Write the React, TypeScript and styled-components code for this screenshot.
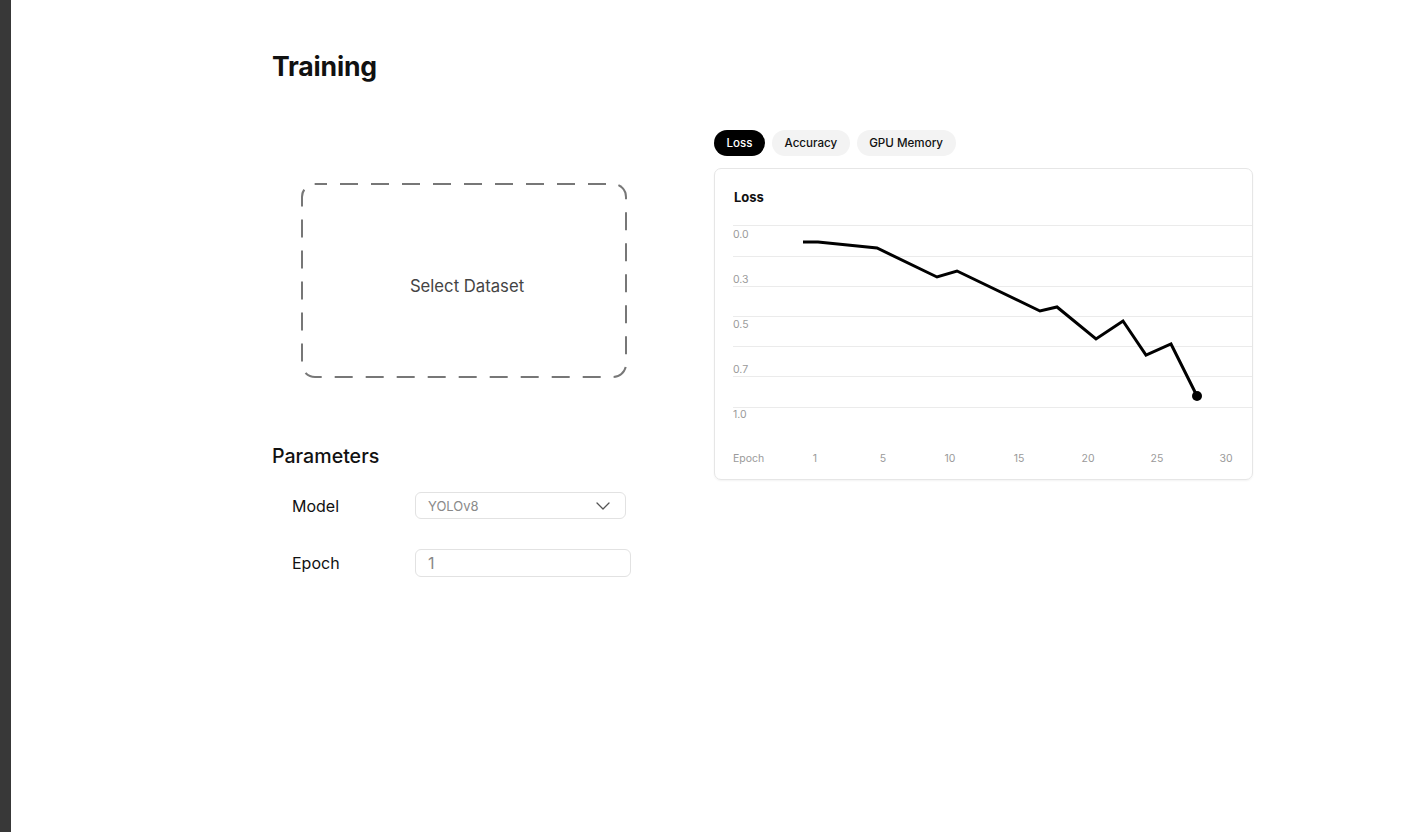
import React from "react";
import styled, { createGlobalStyle } from "styled-components";
import { ChevronDown } from "lucide-react";

const GlobalStyle = createGlobalStyle`
  html, body { margin: 0; padding: 0; background: #fff; }
  body { font-family: Inter, "Noto Sans", sans-serif; color: #111; }
  * { box-sizing: border-box; }
`;

const Shell = styled.div`
  display: flex;
  min-height: 832px;
`;

const Strip = styled.div`
  width: 11px;
  flex: none;
  background: #383838;
`;

const Main = styled.main`
  flex: 1;
  padding: 50px 0 0 261px;
`;

const Title = styled.h1`
  margin: 0;
  font-size: 26.6px;
  line-height: 32px;
  font-weight: 700;
  letter-spacing: -0.2px;
`;

const Columns = styled.div`
  display: flex;
  gap: 58px;
  margin-top: 48px;
`;

const LeftCol = styled.section`
  width: 384px;
  display: flex;
  flex-direction: column;
`;

const dashed = encodeURIComponent(
  `<svg xmlns='http://www.w3.org/2000/svg' width='100%' height='100%'><rect width='100%' height='100%' fill='none' rx='14' ry='14' stroke='#777' stroke-width='4' stroke-dasharray='18 13' stroke-dashoffset='6'/></svg>`
);

const DropZone = styled.button`
  margin: 53px 0 0 29px;
  width: 326px;
  height: 195px;
  border: none;
  border-radius: 14px;
  background: #fff url("data:image/svg+xml,${dashed}") no-repeat;
  display: flex;
  align-items: center;
  justify-content: center;
  padding: 11px 0 0 6px;
  font-family: Inter, sans-serif;
  font-size: 16.7px;
  color: #444;
  cursor: pointer;
`;

const SectionTitle = styled.h2`
  margin: 66px 0 0;
  font-size: 19.6px;
  line-height: 24px;
  font-weight: 500;
`;

const ParamList = styled.div`
  display: flex;
  flex-direction: column;
  gap: 30px;
  margin: 24px 0 0 20px;
`;

const ParamRow = styled.label`
  display: flex;
  align-items: center;
`;

const ParamLabel = styled.span`
  width: 123px;
  font-size: 16px;
  color: #111;
`;

const SelectBox = styled.div`
  width: 211px;
  height: 27px;
  border: 1px solid #e2e2e2;
  border-radius: 6px;
  display: flex;
  align-items: center;
  justify-content: space-between;
  padding: 0 10px 0 12px;
  font-size: 13px;
  color: #8a8a8a;
`;

const TextInput = styled.input`
  width: 216px;
  height: 28px;
  border: 1px solid #e2e2e2;
  border-radius: 6px;
  padding: 0 12px;
  font-family: Inter, sans-serif;
  font-size: 16px;
  color: #888;
  outline: none;
`;

const RightCol = styled.section`
  width: 539px;
  display: flex;
  flex-direction: column;
`;

const Tabs = styled.div`
  display: flex;
  gap: 7px;
`;

const Tab = styled.button<{ $active?: boolean }>`
  height: 26px;
  padding: 0 12.5px;
  border: none;
  border-radius: 13px;
  font-family: Inter, sans-serif;
  font-size: 11.6px;
  font-weight: 500;
  background: ${(p) => (p.$active ? "#000" : "#f3f3f3")};
  color: ${(p) => (p.$active ? "#fff" : "#111")};
  cursor: pointer;
`;

const Card = styled.div`
  margin-top: 12px;
  border: 1px solid #e6e6e6;
  border-radius: 7px;
  box-shadow: 0 1px 2px rgba(0, 0, 0, 0.05);
  padding: 20px 0 9px 18px;
`;

const CardTitle = styled.div`
  font-size: 13px;
  line-height: 16px;
  font-weight: 700;
  padding-left: 1px;
`;

const ChartSvg = styled.svg`
  display: block;
  margin-top: 10px;
  font-family: Inter, sans-serif;
`;

const gridY = [10, 41, 71, 101, 131, 161, 192];
const yLabels: [string, number][] = [
  ["0.0", 23],
  ["0.3", 68],
  ["0.5", 113],
  ["0.7", 158],
  ["1.0", 203],
];
const xLabels: [string, number][] = [
  ["1", 82],
  ["5", 150],
  ["10", 217],
  ["15", 286],
  ["20", 355],
  ["25", 424],
  ["30", 493],
];
const points: [number, number][] = [
  [70, 27],
  [85, 27],
  [144, 33],
  [204, 62],
  [224, 56],
  [307, 96],
  [324, 92],
  [363, 124],
  [390, 106],
  [413, 140],
  [438, 129],
  [464, 181],
];

function LossChart() {
  const last = points[points.length - 1];
  return (
    <ChartSvg width={519} height={255} viewBox="0 0 519 255">
      {gridY.map((y) => (
        <line key={y} x1={0} x2={519} y1={y + 0.5} y2={y + 0.5} stroke="#ebebeb" strokeWidth={1} />
      ))}
      {yLabels.map(([t, y]) => (
        <text key={t} x={0} y={y} fontSize={10.5} fill="#9a9a9a">
          {t}
        </text>
      ))}
      <text x={0} y={247} fontSize={10.5} fill="#9a9a9a">
        Epoch
      </text>
      {xLabels.map(([t, x]) => (
        <text key={t} x={x} y={247} fontSize={10.5} fill="#9a9a9a" textAnchor="middle">
          {t}
        </text>
      ))}
      <polyline
        points={points.map((p) => p.join(",")).join(" ")}
        fill="none"
        stroke="#000"
        strokeWidth={3}
        strokeLinejoin="miter"
      />
      <circle cx={last[0]} cy={last[1]} r={5} fill="#000" />
    </ChartSvg>
  );
}

export default function App() {
  return (
    <>
      <GlobalStyle />
      <Shell>
        <Strip />
        <Main>
          <Title>Training</Title>
          <Columns>
            <LeftCol>
              <DropZone type="button">Select Dataset</DropZone>
              <SectionTitle>Parameters</SectionTitle>
              <ParamList>
                <ParamRow>
                  <ParamLabel>Model</ParamLabel>
                  <SelectBox>
                    <span>YOLOv8</span>
                    <ChevronDown size={24} strokeWidth={1.3} color="#555" />
                  </SelectBox>
                </ParamRow>
                <ParamRow>
                  <ParamLabel>Epoch</ParamLabel>
                  <TextInput defaultValue="1" />
                </ParamRow>
              </ParamList>
            </LeftCol>
            <RightCol>
              <Tabs>
                <Tab $active>Loss</Tab>
                <Tab>Accuracy</Tab>
                <Tab>GPU Memory</Tab>
              </Tabs>
              <Card>
                <CardTitle>Loss</CardTitle>
                <LossChart />
              </Card>
            </RightCol>
          </Columns>
        </Main>
      </Shell>
    </>
  );
}
